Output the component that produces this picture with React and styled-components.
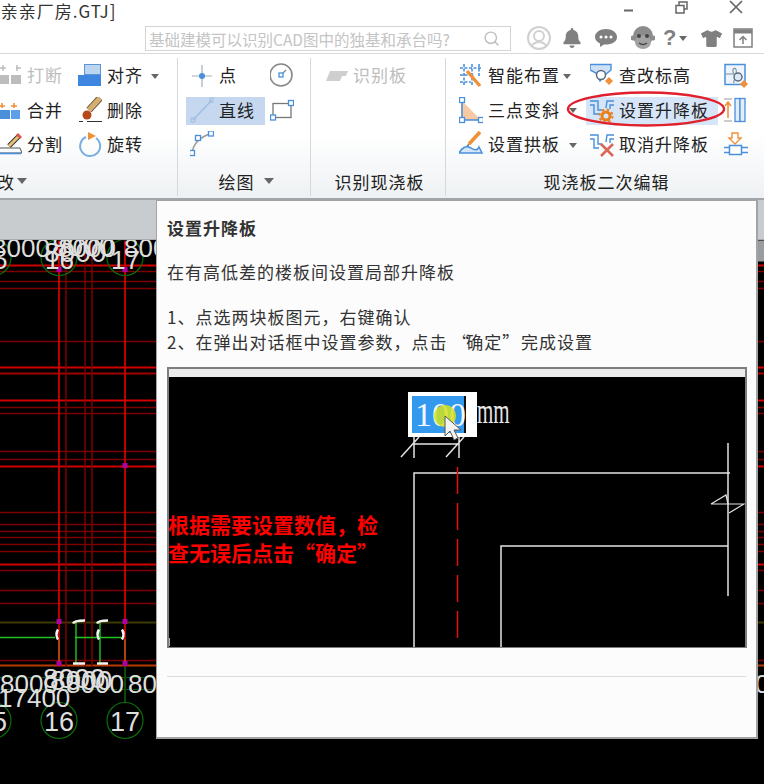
import React from "react";
import styled, { createGlobalStyle } from "styled-components";
import { FaBell, FaTshirt } from "react-icons/fa";
import { Search } from "lucide-react";

const BLUE = "#4a8fdc";
const ORANGE = "#f0913a";
const CJK = `"Noto Sans CJK SC", "Liberation Sans", sans-serif`;

const GlobalStyle = createGlobalStyle`
  html, body {
    margin: 0;
    background: #000;
    font-family: ${CJK};
  }
`;

const Window = styled.div`
  position: relative;
  width: 764px;
  height: 784px;
  display: flex;
  flex-direction: column;
  overflow: hidden;
  background: #000;
`;

const TitleBar = styled.div`
  height: 26px;
  display: flex;
  align-items: flex-start;
  background: #fff;
  color: #333;
`;

const Title = styled.div`
  width: 607px;
  margin-left: -6px;
  font-size: 17px;
  line-height: 22px;
  letter-spacing: 1px;
  white-space: nowrap;
`;

const WinControls = styled.div`
  display: flex;
  align-items: flex-start;
  color: #666;
`;

const WinButton = styled.div`
  width: 54px;
  height: 16px;
  display: flex;
  justify-content: center;
`;

const SearchRow = styled.div`
  height: 27px;
  display: flex;
  align-items: flex-start;
  padding-left: 145px;
  background: #fff;
  border-bottom: 1px solid #d9d9d9;
`;

const SearchBox = styled.div`
  box-sizing: border-box;
  width: 366px;
  height: 25px;
  padding: 0 10px 0 3px;
  display: flex;
  align-items: center;
  justify-content: space-between;
  border: 1px solid #d4d4d4;
  color: #c4c4c4;
  font-size: 15.5px;
  white-space: nowrap;
`;

const Tray = styled.div`
  margin-left: 11px;
  height: 24px;
  display: flex;
  align-items: center;
  color: #808080;
`;

const TraySlot = styled.div`
  width: ${(p) => p.$w}px;
  display: flex;
  align-items: center;
  justify-content: ${(p) => (p.$start ? "flex-start" : "center")};
  font: bold 22px "Liberation Sans", sans-serif;
  line-height: 24px;
`;

const Ribbon = styled.div`
  position: relative;
  height: 144px;
  display: flex;
  background: linear-gradient(#fff 55%, #eef1f3);
  border-bottom: 2px solid #a2a5a9;
`;

const Group = styled.section`
  box-sizing: border-box;
  width: ${(p) => p.$w}px;
  flex: ${(p) => (p.$grow ? 1 : "none")};
  margin: 4px 0 2px;
  padding: 4px 0 0 ${(p) => p.$pad || 0}px;
  display: flex;
  flex-direction: column;
  justify-content: space-between;
  overflow: hidden;
  border-right: ${(p) => (p.$grow ? "none" : "1px solid #d5d9dc")};
`;

const Tools = styled.div`
  display: grid;
  grid-template-columns: ${(p) => p.$cols};
  grid-auto-rows: 28px;
  row-gap: 6.5px;
`;

const Tool = styled.div`
  display: flex;
  align-items: center;
  gap: 5px;
  height: 28px;
  padding-left: ${(p) => p.$pad || 0}px;
  background: ${(p) => p.$bg || "transparent"};
  color: ${(p) => (p.$off ? "#bdbdbd" : "#222")};
  font-size: 17px;
  letter-spacing: 1px;
  white-space: nowrap;
`;

const Label = styled.span`
  padding-bottom: 3px;
`;

const Caret = styled.i`
  display: inline-block;
  margin-left: ${(p) => p.$gap || 0}px;
  border-style: solid;
  border-width: ${(p) => (p.$big ? "6px 5px 0" : "5px 4px 0")};
  border-color: #666 transparent transparent;
`;

const GroupLabel = styled.div`
  height: 30px;
  margin-left: ${(p) => p.$left || 0}px;
  padding-right: ${(p) => p.$shift || 0}px;
  display: flex;
  align-items: center;
  justify-content: ${(p) => (p.$left ? "flex-start" : "center")};
  color: #222;
  font-size: 17px;
  letter-spacing: 1px;
  white-space: nowrap;
`;

const RedMark = styled.svg`
  position: absolute;
  left: 566px;
  top: 36px;
`;

const Band = styled.div`
  height: 39px;
  background: #c9cccf;
  border-bottom: 1px solid #a9abae;
`;

const Canvas = styled.svg`
  display: block;
  flex: 1;
  width: 764px;
  background: #000;
`;

const Tip = styled.aside`
  position: absolute;
  left: 156px;
  top: 200px;
  box-sizing: border-box;
  width: 602px;
  height: 539px;
  padding: 15px 10px 0;
  background: #fcfcfc;
  border: 1px solid #a3a3a3;
  border-width: 1px 2px 2px 1px;
  color: #333;
  font-size: 17px;
  letter-spacing: 1px;
`;

const TipTitle = styled.h4`
  margin: 0;
  font-size: 17px;
  font-weight: 700;
  line-height: 24px;
`;

const TipText = styled.p`
  margin: 20px 0 0;
  line-height: 24px;
`;

const TipList = styled.div`
  margin-top: 20px;
  line-height: 25px;
  white-space: nowrap;
`;

const Quote = styled.span`
  letter-spacing: -3px;
`;

const Shot = styled.div`
  position: relative;
  box-sizing: border-box;
  width: 580px;
  height: 281px;
  margin-top: 13px;
  background: #000;
  border: 2px solid #7d7d7d;
  border-bottom-width: 1px;
  overflow: hidden;
`;

const ShotDrawing = styled.svg`
  display: block;
`;

const ValueBox = styled.div`
  position: absolute;
  left: 239px;
  top: 23px;
  box-sizing: border-box;
  width: 69px;
  height: 45px;
  padding: 4px 11px 4px 4px;
  background: #fff;
`;

const ValueText = styled.div`
  height: 37px;
  background: #3399ee;
  border-right: 2px solid #111;
  color: #f4f8ff;
  font: 34px/37px "Liberation Serif", serif;
  letter-spacing: 0;
  text-indent: 3px;
`;

const Unit = styled.div`
  position: absolute;
  left: 308px;
  top: 22px;
  color: #e6e6e6;
  font: 35px/42px "Liberation Serif", serif;
  letter-spacing: 0;
  transform: scaleX(0.6);
  transform-origin: left center;
`;

const Cursor = styled.svg`
  position: absolute;
  left: 262px;
  top: 29px;
`;

const RedNote = styled.div`
  position: absolute;
  left: -1px;
  top: 141px;
  color: #f00;
  font-size: 21px;
  font-weight: 700;
  letter-spacing: 0;
  line-height: 28px;
  white-space: nowrap;
`;

const TipRule = styled.hr`
  height: 1px;
  margin: 28px 0 0;
  border: 0;
  background: #dcdcdc;
`;

// small blue handle used by the drawing tools
const Handle = ({ x, y, s = 5 }) => (
  <rect x={x - s / 2} y={y - s / 2} width={s} height={s} fill="#fff" stroke={BLUE} strokeWidth="1.3" />
);

const Ico = ({ w = 24, children }) => (
  <svg width={w} height="28" viewBox={`0 0 ${w} 28`} fill="none" style={{ flex: "none" }}>
    {children}
  </svg>
);

const Stepped = () => (
  <g stroke={BLUE} strokeWidth="1.4">
    <path d="M0 4H8V13H12" />
    <path d="M0 8H4V17H9" />
    <path d="M24 4H17L16 11" />
    <path d="M24 8H20V12" />
  </g>
);

const icons = {
  breakLine: (
    <Ico w={22}>
      <rect x="0" y="13" width="9" height="9" fill="#bdbdbd" />
      <rect x="11" y="13" width="10" height="9" fill="#bdbdbd" />
      <path d="M0 6H6M16 6H21M17 3V9M3 3V9" stroke="#bdbdbd" strokeWidth="1.5" />
    </Ico>
  ),
  merge: (
    <Ico w={22}>
      <rect x="0" y="13" width="10" height="9" fill={BLUE} />
      <rect x="11" y="13" width="9" height="9" fill="#5ba0e8" />
      <path d="M0 9H5M2 6V11M11 9H17M14 6V11" stroke={ORANGE} strokeWidth="1.6" />
    </Ico>
  ),
  split: (
    <Ico w={22}>
      <path d="M0 17H20L22 22H0" stroke="#555" strokeWidth="1" />
      <path d="M0 22.5H21" stroke={BLUE} strokeWidth="1.6" />
      <path d="M19 5L9 15" stroke="#333" strokeWidth="5" />
      <path d="M19 5L9 15" stroke="#e6c277" strokeWidth="3" />
      <path d="M17 3L21 7" stroke="#d9534f" strokeWidth="3" />
    </Ico>
  ),
  align: (
    <Ico>
      <rect x="6.5" y="2.5" width="16" height="10" fill="#bcd6f2" stroke="#5b96d8" />
      <rect x="0" y="13" width="23" height="11" fill="#3f86e0" />
    </Ico>
  ),
  eraser: (
    <Ico>
      <path d="M22 1L11 13" stroke="#6d5a3c" strokeWidth="7" />
      <path d="M22 1L11 13" stroke="#d5ae72" strokeWidth="5" />
      <circle cx="9" cy="18" r="4.5" fill="#b5481b" />
      <path d="M1 24.5H5M9 24.5H24" stroke="#333" strokeWidth="1.2" />
    </Ico>
  ),
  rotate: (
    <Ico>
      <path d="M8 6A10 10 0 1 0 18 7" stroke="#7aaee0" strokeWidth="2" />
      <path d="M10 1L18 5L10 9Z" fill={ORANGE} />
    </Ico>
  ),
  point: (
    <Ico>
      <path d="M2 14H22M12 3V25" stroke="#9fb0c0" strokeWidth="1.2" />
      <circle cx="12" cy="14" r="3" fill={BLUE} />
    </Ico>
  ),
  circle: (
    <Ico>
      <circle cx="11" cy="13" r="11" stroke="#888" strokeWidth="1.6" />
      <path d="M11 13L16 8" stroke="#888" strokeWidth="1.2" />
      <Handle x={11} y={13} s={4} />
    </Ico>
  ),
  line: (
    <Ico>
      <path d="M3 23L22 3" stroke="#9dbbe0" strokeWidth="1.3" />
      <path d="M1 21H5V25H1ZM20 1H24V5H20Z" stroke="#9dbbe0" />
    </Ico>
  ),
  rect: (
    <Ico>
      <rect x="3" y="6.5" width="18" height="14" stroke="#777" strokeWidth="1.3" />
      <Handle x={21} y={6} />
      <Handle x={3} y={20.5} />
    </Ico>
  ),
  arc: (
    <Ico>
      <path d="M2 22Q4 8 21 2.5" stroke="#999" strokeWidth="1.4" />
      <Handle x={2} y={22} />
      <Handle x={8} y={7} />
      <Handle x={21} y={2.5} />
    </Ico>
  ),
  plate: (
    <Ico w={22}>
      <path d="M4 9H22L20 14H16L14 19H0Z" fill="#cfcfcf" />
    </Ico>
  ),
  smart: (
    <Ico>
      <path d="M5 2V24M13 2V24M20 2V14M1 6H23M1 13H15M1 20H12" stroke={BLUE} strokeWidth="1.6" strokeDasharray="3 1.5" />
      <path d="M8 9L21 24" stroke={ORANGE} strokeWidth="3.4" />
    </Ico>
  ),
  skew: (
    <Ico>
      <path d="M3 4V23H22Z" fill="#f9c9a3" />
      <path d="M3 4V23H22" stroke={BLUE} strokeWidth="1.6" />
      <Handle x={3} y={3} />
      <Handle x={3} y={23} />
      <Handle x={22} y={23} />
    </Ico>
  ),
  arch: (
    <Ico>
      <path d="M21 1L10 13" stroke={ORANGE} strokeWidth="3.6" />
      <path d="M10 13L7 17" stroke="#777" strokeWidth="1.5" />
      <path d="M0 22Q5 13 12 17Q18 21 20 16L23 22Z" fill="#d4e5f8" stroke={BLUE} strokeWidth="1.5" />
    </Ico>
  ),
  check: (
    <Ico>
      <path d="M0 2.5H21V8L15 13L10 19L6 11L0 8Z" fill="#cfe0f5" stroke={BLUE} strokeWidth="1.4" />
      <circle cx="11" cy="13" r="4.5" fill="#fff" stroke="#566a80" strokeWidth="1.5" />
      <path d="M19 15L23 19L19 23L15 19Z" fill={ORANGE} />
    </Ico>
  ),
  raise: (
    <Ico>
      <Stepped />
      <circle cx="16" cy="19" r="4" stroke="#e8801e" strokeWidth="3" />
      <circle cx="16" cy="19" r="6.5" stroke="#e8801e" strokeWidth="2" strokeDasharray="2.5 2.6" />
    </Ico>
  ),
  cancel: (
    <Ico>
      <Stepped />
      <path d="M11 13L23 25M23 13L11 25" stroke="#d9685a" strokeWidth="2.6" />
    </Ico>
  ),
  elevation: (
    <Ico>
      <rect x="1" y="2.5" width="20" height="20" fill="#eef4fb" stroke={BLUE} strokeWidth="1.5" />
      <path d="M2 12H10C6 6 14 3 12 12C11 18 9 19 10 21" stroke="#7a8a9a" strokeWidth="1.1" />
      <circle cx="14" cy="15" r="4" fill="#dfe9f5" stroke="#566a80" strokeWidth="1.4" />
      <path d="M20 18L24 22L20 26L16 22Z" fill={ORANGE} />
    </Ico>
  ),
  lift: (
    <Ico>
      <path d="M0 2H8M0 24H8" stroke="#999" strokeWidth="1.2" />
      <path d="M4 21V6M1 9L4 5L7 9" stroke={ORANGE} strokeWidth="1.6" />
      <rect x="11" y="1.5" width="5" height="23" fill="#e3eefa" stroke={BLUE} strokeWidth="1.3" />
      <rect x="16" y="1.5" width="5" height="23" fill="#e3eefa" stroke={BLUE} strokeWidth="1.3" />
    </Ico>
  ),
  drop: (
    <Ico>
      <path d="M8 2H14V7H17L11 13L5 7H8Z" fill="#fff" stroke={ORANGE} strokeWidth="1.4" />
      <rect x="5.5" y="14.5" width="12" height="9" fill="#fff" stroke={BLUE} strokeWidth="1.5" />
      <path d="M0 16.5H5M0 21.5H5M18 16.5H24M18 21.5H24" stroke={BLUE} strokeWidth="1.5" />
    </Ico>
  ),
};

const RED_BRIGHT = "#d00000";
const RED_DARK = "#7c0000";

const gridH = [
  [266, RED_BRIGHT], [272, RED_DARK], [282, RED_DARK], [289, RED_DARK], [342, RED_DARK],
  [368, RED_BRIGHT], [374, "#a00000"], [401, RED_BRIGHT], [408, RED_DARK], [414, RED_DARK],
  [452, RED_DARK], [460, RED_DARK], [467, RED_BRIGHT], [513, RED_DARK], [525, RED_DARK],
  [532, RED_DARK], [538, RED_DARK], [545, RED_DARK], [552, RED_DARK], [565, RED_BRIGHT],
  [571, RED_DARK], [591, RED_DARK], [604, RED_DARK], [623, "#3c3a00"], [661, RED_DARK],
  [666, "#b83a00"],
];

const gridV = [
  [59, RED_BRIGHT], [66, RED_DARK], [85, RED_DARK], [92, RED_DARK], [125, RED_BRIGHT],
];

const axisX = [-7, 59, 125, 191, 257, 323, 389, 455, 521, 587, 653, 719];
const pins = [[59, 270], [125, 270], [125, 466], [59, 622], [125, 622], [59, 664], [125, 664]];
const brackets = [
  "M73 624Q74 621 85 621", "M97 624Q98 621 108 621", "M73 664H85", "M97 664H108",
  "M58 630Q55 635 58 640", "M99 630Q96 635 99 640", "M122 630Q125 635 122 640",
];

const CadText = ({ x, y, size = 26, children }) => (
  <text x={x} y={y} fill="#dedede" fontSize={size} fontFamily='"Liberation Sans", sans-serif'>
    {children}
  </text>
);

const CadView = () => (
  <Canvas viewBox="0 241 764 543" height="543">
    <rect x="757" y="241" width="7" height="21" fill="#9a9da0" />
    {gridH.map(([y, c]) => (
      <path key={y} d={`M0 ${y}H764`} stroke={c} strokeWidth={c === RED_DARK ? 1.5 : 1.8} />
    ))}
    {gridV.map(([x, c]) => (
      <path key={x} d={`M${x} 241V667`} stroke={c} strokeWidth={c === RED_DARK ? 1.5 : 1.8} />
    ))}
    <path d="M0 678H155M0 690H155" stroke="#0b5a0b" strokeDasharray="5 2" />
    <path d="M125 667V703" stroke="#0a6e0a" strokeWidth="1.4" />
    <path d="M59 640V664M125 640V664" stroke="#a8600c" strokeWidth="1.4" />
    <path d="M0 638H55M75 638H122M76 622V664M100 622V664" stroke="#22c422" strokeWidth="1.4" />
    <path d={brackets.join("")} stroke="#f4f4f4" strokeWidth="2.5" fill="none" />
    {pins.map(([x, y]) => (
      <rect key={`${x}-${y}`} x={x - 2.5} y={y - 2.5} width="5" height="5" fill="#b000a0" />
    ))}
    {axisX.map((x) => (
      <g key={x} stroke="#0a6e0a" strokeWidth="1.2" fill="none">
        <circle cx={x} cy="258" r="18" />
        <circle cx={x} cy="721" r="18" />
      </g>
    ))}
    <CadText x={-8} y={257}>8000</CadText>
    <CadText x={58} y={257}>8000</CadText>
    <CadText x={124} y={257}>8000</CadText>
    <CadText x={44} y={262} size={28}>8000</CadText>
    <CadText x={52} y={256} size={28}>8000</CadText>
    <CadText x={-7} y={269}>5</CadText>
    <CadText x={45} y={269}>16</CadText>
    <CadText x={111} y={269}>17</CadText>
    <CadText x={0} y={693}>8000</CadText>
    <CadText x={66} y={693}>8000</CadText>
    <CadText x={128} y={693}>8000</CadText>
    <CadText x={726} y={693}>8000</CadText>
    <CadText x={43} y={688} size={28}>8000</CadText>
    <CadText x={50} y={690} size={28}>8000</CadText>
    <CadText x={-2} y={707}>17400</CadText>
    <CadText x={-8} y={731} size={27}>5</CadText>
    <CadText x={44} y={731} size={27}>16</CadText>
    <CadText x={110} y={731} size={27}>17</CadText>
  </Canvas>
);

const ShotView = () => (
  <ShotDrawing width="576" height="278" viewBox="169 369 576 278">
    <rect x="169" y="369" width="576" height="8" fill="#ececec" />
    <g stroke="#e4e4e4" strokeWidth="1.5" fill="none">
      <path d="M414 648V473H730M728 443V596M501 648V546H728" />
      <path d="M414 444H459M414 437V458M459 437V458M401 457L419 437M446 457L464 437" />
      <path d="M711 504L726 495L728 504M729 513L744 504H711" strokeWidth="1.2" />
      <path d="M169 638V646" />
    </g>
    <path d="M457.5 467V638" stroke="#e01010" strokeWidth="1.5" strokeDasharray="27 9" />
  </ShotDrawing>
);

const App = () => (
  <>
    <GlobalStyle />
    <Window>
      <TitleBar>
        <Title>[亲亲厂房.GTJ]</Title>
        <WinControls>
          <WinButton>
            <svg width="12" height="16"><path d="M2 10.5H11" stroke="#666" strokeWidth="2" /></svg>
          </WinButton>
          <WinButton>
            <svg width="14" height="16">
              <path d="M4 5V2H12V9H9M1 5.5H9V13H1Z" stroke="#666" strokeWidth="1.5" fill="none" />
            </svg>
          </WinButton>
          <WinButton>
            <svg width="14" height="16"><path d="M1 1L13 13M13 1L1 13" stroke="#666" strokeWidth="1.7" /></svg>
          </WinButton>
        </WinControls>
      </TitleBar>
      <SearchRow>
        <SearchBox>
          基础建模可以识别CAD图中的独基和承台吗?
          <Search size={17} color="#bdbdbd" />
        </SearchBox>
        <Tray>
          <TraySlot $w={33}>
            <svg width="24" height="24" viewBox="0 0 24 24">
              <circle cx="12" cy="12" r="11" fill="#fff" stroke="#d0d0d0" strokeWidth="2" />
              <circle cx="12" cy="10" r="5" fill="none" stroke="#d0d0d0" strokeWidth="2" />
              <path d="M4 20Q12 12 20 20" fill="none" stroke="#d0d0d0" strokeWidth="2" />
            </svg>
          </TraySlot>
          <TraySlot $w={34}><FaBell size={20} /></TraySlot>
          <TraySlot $w={34}>
            <svg width="22" height="20" viewBox="0 0 22 20">
              <path d="M11 1C5 1 0 4.5 0 9C0 12 2 14 5 15.5L5 19L9 16.5C16 17 22 14 22 9C22 4.5 17 1 11 1Z" fill="#808080" />
              <circle cx="6" cy="9" r="1.5" fill="#fff" />
              <circle cx="11" cy="9" r="1.5" fill="#fff" />
              <circle cx="16" cy="9" r="1.5" fill="#fff" />
            </svg>
          </TraySlot>
          <TraySlot $w={40}>
            <svg width="24" height="24" viewBox="0 0 24 24">
              <circle cx="12" cy="10" r="10" fill="#8c8c8c" />
              <circle cx="2" cy="12" r="2.5" fill="#8c8c8c" />
              <circle cx="22" cy="12" r="2.5" fill="#8c8c8c" />
              <ellipse cx="12" cy="16" rx="8" ry="7" fill="#a2a2a2" />
              <circle cx="8" cy="10" r="2" fill="#444" />
              <circle cx="16" cy="10" r="2" fill="#444" />
              <path d="M8 17Q12 20 16 17" stroke="#444" strokeWidth="1.3" fill="none" />
            </svg>
          </TraySlot>
          <TraySlot $w={32} $start>
            ?<Caret $gap={3} />
          </TraySlot>
          <TraySlot $w={32}><FaTshirt size={21} /></TraySlot>
          <TraySlot $w={32}>
            <svg width="20" height="20" viewBox="0 0 20 20" fill="none" stroke="#808080" strokeWidth="1.5">
              <rect x="1" y="1" width="18" height="18" />
              <path d="M1 3.5H19" strokeWidth="4" />
              <path d="M10 16V9M6.5 12L10 8.5L13.5 12" />
            </svg>
          </TraySlot>
        </Tray>
      </SearchRow>

      <Ribbon>
        <Group $w={178}>
          <Tools $cols="78px 99px">
            <Tool $off>{icons.breakLine}<Label>打断</Label></Tool>
            <Tool>{icons.align}<Label>对齐</Label><Caret $gap={3} /></Tool>
            <Tool>{icons.merge}<Label>合并</Label></Tool>
            <Tool>{icons.eraser}<Label>删除</Label></Tool>
            <Tool>{icons.split}<Label>分割</Label></Tool>
            <Tool>{icons.rotate}<Label>旋转</Label></Tool>
          </Tools>
          <GroupLabel $left={-21}>修改<Caret $big $gap={2} /></GroupLabel>
        </Group>
        <Group $w={133} $pad={8}>
          <Tools $cols="79px 45px">
            <Tool $pad={4}>{icons.point}<Label>点</Label></Tool>
            <Tool $pad={5}>{icons.circle}</Tool>
            <Tool $pad={4} $bg="#c6d8ef">{icons.line}<Label>直线</Label></Tool>
            <Tool $pad={5}>{icons.rect}</Tool>
            <Tool $pad={4}>{icons.arc}</Tool>
          </Tools>
          <GroupLabel $shift={4}>绘图<Caret $big $gap={9} /></GroupLabel>
        </Group>
        <Group $w={135} $pad={15}>
          <Tools $cols="1fr">
            <Tool $off>{icons.plate}<Label>识别板</Label></Tool>
          </Tools>
          <GroupLabel $shift={12}>识别现浇板</GroupLabel>
        </Group>
        <Group $grow $pad={13}>
          <Tools $cols="127px 132px 40px">
            <Tool>{icons.smart}<Label>智能布置</Label><Caret $gap={-2} /></Tool>
            <Tool $pad={4}>{icons.check}<Label>查改标高</Label></Tool>
            <Tool $pad={6}>{icons.elevation}</Tool>
            <Tool>{icons.skew}<Label>三点变斜</Label><Caret $gap={4} /></Tool>
            <Tool $pad={4} $bg="#d6e5f7">{icons.raise}<Label>设置升降板</Label></Tool>
            <Tool $pad={6}>{icons.lift}</Tool>
            <Tool>{icons.arch}<Label>设置拱板</Label><Caret $gap={4} /></Tool>
            <Tool $pad={4}>{icons.cancel}<Label>取消升降板</Label></Tool>
            <Tool $pad={6}>{icons.drop}</Tool>
          </Tools>
          <GroupLabel $shift={10}>现浇板二次编辑</GroupLabel>
        </Group>
        <RedMark width="162" height="38" viewBox="0 0 162 38">
          <ellipse cx="80" cy="19" rx="78" ry="16.5" fill="none" stroke="#e0202c" strokeWidth="2.4" />
        </RedMark>
      </Ribbon>

      <Band />
      <CadView />

      <Tip>
        <TipTitle>设置升降板</TipTitle>
        <TipText>在有高低差的楼板间设置局部升降板</TipText>
        <TipList>
          1、点选两块板图元，右键确认
          <br />
          2、在弹出对话框中设置参数，点击 <Quote>“</Quote>确定<Quote>”</Quote> 完成设置
        </TipList>
        <Shot>
          <ShotView />
          <ValueBox>
            <ValueText>100</ValueText>
          </ValueBox>
          <Unit>mm</Unit>
          <Cursor width="36" height="44" viewBox="0 0 36 44">
            <circle cx="14" cy="18" r="11" fill="#d4e21e" fillOpacity="0.85" />
            <path d="M14 18V38L19 33L23 42L27 40L23 32H30Z" fill="#f2f2f2" stroke="#555" strokeWidth="1" />
          </Cursor>
          <RedNote>
            根据需要设置数值，检
            <br />
            查无误后点击“确定”
          </RedNote>
        </Shot>
        <TipRule />
      </Tip>
    </Window>
  </>
);

export default App;
